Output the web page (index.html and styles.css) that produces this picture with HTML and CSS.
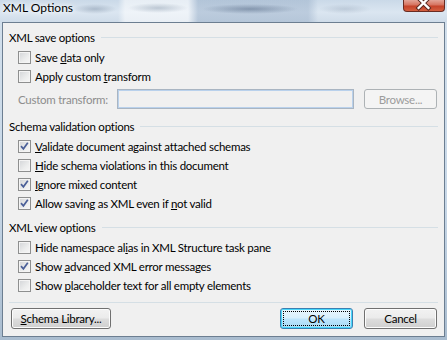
FILE: index.html
```html
<!DOCTYPE html>
<html lang="en">
<head>
    <meta charset="UTF-8">
    <title>XML Options</title>
    <link rel="stylesheet" href="styles.css">
</head>
<body>
    <div class="window">
        <div class="titlebar">
            <span class="title">XML Options</span>
            <span class="close">
                <svg width="42" height="12" viewBox="0 0 42 12">
                    <path d="M16 -2 L26 8 M26 -2 L16 8" stroke="#5a2a22" stroke-width="4.4" stroke-linecap="square"/>
                    <path d="M16 -2 L26 8 M26 -2 L16 8" stroke="#ffffff" stroke-width="2.4" stroke-linecap="square"/>
                </svg>
            </span>
        </div>

        <div class="client">
            <div class="group">
                <div class="group-head"><span>XML save options</span></div>
                <div class="rows">
                    <div class="check"><span class="box"></span><span>Save <u>d</u>ata only</span></div>
                    <div class="check"><span class="box"></span><span>Apply custom <u>t</u>ransform</span></div>
                    <div class="transform-row">
                        <span class="muted">Custom transform:</span>
                        <input class="field" type="text" disabled>
                        <button class="btn" disabled>Browse...</button>
                    </div>
                </div>
            </div>

            <div class="group">
                <div class="group-head"><span>Schema validation options</span></div>
                <div class="rows">
                    <div class="check"><span class="box on"><svg width="11" height="11" viewBox="0 0 11 11"><path d="M2 5.2 L4.4 7.8 L8.8 1.8" fill="none" stroke="#4a5f98" stroke-width="1.7"/></svg></span><span><u>V</u>alidate document against attached schemas</span></div>
                    <div class="check"><span class="box"></span><span><u>H</u>ide schema violations in this document</span></div>
                    <div class="check"><span class="box on"><svg width="11" height="11" viewBox="0 0 11 11"><path d="M2 5.2 L4.4 7.8 L8.8 1.8" fill="none" stroke="#4a5f98" stroke-width="1.7"/></svg></span><span><u>I</u>gnore mixed content</span></div>
                    <div class="check"><span class="box on"><svg width="11" height="11" viewBox="0 0 11 11"><path d="M2 5.2 L4.4 7.8 L8.8 1.8" fill="none" stroke="#4a5f98" stroke-width="1.7"/></svg></span><span>Allow saving as XML even if <u>n</u>ot valid</span></div>
                </div>
            </div>

            <div class="group">
                <div class="group-head"><span>XML view options</span></div>
                <div class="rows">
                    <div class="check"><span class="box"></span><span>Hide namespace al<u>i</u>as in XML Structure task pane</span></div>
                    <div class="check"><span class="box on"><svg width="11" height="11" viewBox="0 0 11 11"><path d="M2 5.2 L4.4 7.8 L8.8 1.8" fill="none" stroke="#4a5f98" stroke-width="1.7"/></svg></span><span>Show <u>a</u>dvanced XML error messages</span></div>
                    <div class="check"><span class="box"></span><span>Show <u>p</u>laceholder text for all empty elements</span></div>
                </div>
            </div>

            <div class="sep"></div>

            <div class="actions">
                <button class="btn library"><u>S</u>chema Library...</button>
                <button class="btn default"><span class="focus">OK</span></button>
                <button class="btn">Cancel</button>
            </div>
        </div>
    </div>
</body>
</html>
```

FILE: styles.css
```css
:root {
    --face: #f0f0f0;
    --line: #d5dfe5;
    --text: #000000;
    --muted: #8d8d8d;
    --frame: #6c7e91;
}

body {
    margin: 0;
    font-family: Lato, "Segoe UI", sans-serif;
    font-size: 12px;
    color: var(--text);
    background: #c9d8e7;
}

u {
    text-underline-offset: 1px;
}

.window {
    width: 447px;
    height: 340px;
    box-sizing: border-box;
    padding: 0 2px 3px 2px;
    display: flex;
    flex-direction: column;
    background: linear-gradient(to bottom, #d3e0ec 0%, #c7d7e7 60%, #a9bccf 100%);
}

/* blurred aero glass */
.titlebar {
    height: 22px;
    margin: 0 -2px;
    padding: 0 2px 0 3px;
    display: flex;
    justify-content: space-between;
    align-items: flex-start;
    background:
        radial-gradient(ellipse 22px 5px at 95px 9px, rgba(120, 138, 160, 0.45), transparent),
        radial-gradient(ellipse 30px 5px at 158px 8px, rgba(130, 148, 168, 0.45), transparent),
        radial-gradient(ellipse 48px 5px at 250px 9px, rgba(80, 100, 128, 0.5), transparent),
        radial-gradient(ellipse 26px 5px at 345px 9px, rgba(140, 156, 176, 0.35), transparent),
        linear-gradient(to right, transparent 118px, rgba(255, 255, 255, 0.55) 125px, rgba(255, 255, 255, 0.55) 188px, rgba(150, 172, 198, 0.45) 198px, rgba(150, 172, 198, 0.45) 308px, transparent 318px),
        linear-gradient(to bottom, #cad9e8 0%, #dbe6f1 55%, #cfdce9 100%);
}

.title {
    line-height: 16px;
    text-shadow: 0 0 4px #ffffff, 0 0 8px #ffffff;
}

.close {
    width: 42px;
    height: 12px;
    box-sizing: border-box;
    border: 1px solid #6a2c22;
    border-top: none;
    border-radius: 0 0 4px 4px;
    background: linear-gradient(to bottom, #e3a497 0%, #d6735f 45%, #c5432a 55%, #d45f40 100%);
    overflow: hidden;
    display: flex;
}

.close svg {
    display: block;
    margin-left: -1px;
}

.client {
    flex: 1;
    border: 1px solid var(--frame);
    background: var(--face);
    padding: 6px 6px 7px 6px;
    display: flex;
    flex-direction: column;
    font-size: 11.5px;
    letter-spacing: -0.25px;
}

.group + .group {
    margin-top: 6px;
}

.group-head {
    height: 16px;
    display: flex;
    align-items: center;
    gap: 6px;
}

.group-head::after {
    content: "";
    flex: 1;
    height: 1px;
    background: var(--line);
}

.rows {
    margin-top: 3px;
}

.check {
    height: 19px;
    padding-left: 9px;
    display: flex;
    align-items: center;
    gap: 4px;
}

.box {
    width: 13px;
    height: 13px;
    box-sizing: border-box;
    border: 1px solid #8e8f8f;
    background: linear-gradient(135deg, #d2d4d7 0%, #eceded 60%, #f7f7f7 100%);
    box-shadow: inset 0 0 0 1px #f4f4f4;
    display: flex;
    align-items: center;
    justify-content: center;
}

.transform-row {
    height: 20px;
    margin: 3px 0;
    padding-left: 9px;
    display: flex;
    align-items: center;
}

.muted {
    width: 99px;
    color: var(--muted);
}

.field {
    width: 237px;
    height: 20px;
    box-sizing: border-box;
    margin: 0;
    border: 1px solid #a9b5c2;
    box-shadow: inset 0 0 0 1px #b9d1ec;
    background: var(--face);
}

.btn {
    width: 73px;
    height: 20px;
    box-sizing: border-box;
    margin: 0;
    padding: 0;
    font-family: inherit;
    font-size: 11.5px;
    letter-spacing: -0.25px;
    color: var(--text);
    border: 1px solid #707070;
    border-radius: 3px;
    box-shadow: inset 0 0 0 1px #fcfcfc;
    background: linear-gradient(to bottom, #f2f2f2 0%, #ebebeb 48%, #dddddd 52%, #cfcfcf 100%);
}

.btn:disabled {
    border-color: #adb2b5;
    color: #9c9c9c;
    box-shadow: none;
    background: #f4f4f4;
}

.transform-row .btn {
    margin-left: auto;
    margin-right: 1px;
}

.sep {
    margin-top: 7px;
    height: 1px;
    background: var(--line);
}

.actions {
    margin-top: 5px;
    padding: 0 1px 0 2px;
    display: flex;
    gap: 11px;
}

.actions .btn {
    height: 21px;
}

.actions .library {
    width: 100px;
    margin-right: auto;
}

.btn.default {
    border-color: #3c7fb1;
    box-shadow: inset 0 0 0 1px #48d7fb;
    background: linear-gradient(to bottom, #eaf6fd 0%, #d9f0fc 48%, #bee6fd 52%, #a7d9f5 100%);
    padding: 2px;
}

.focus {
    display: flex;
    align-items: center;
    justify-content: center;
    height: 100%;
    outline: 1px dotted #000000;
    outline-offset: -1px;
}
```
